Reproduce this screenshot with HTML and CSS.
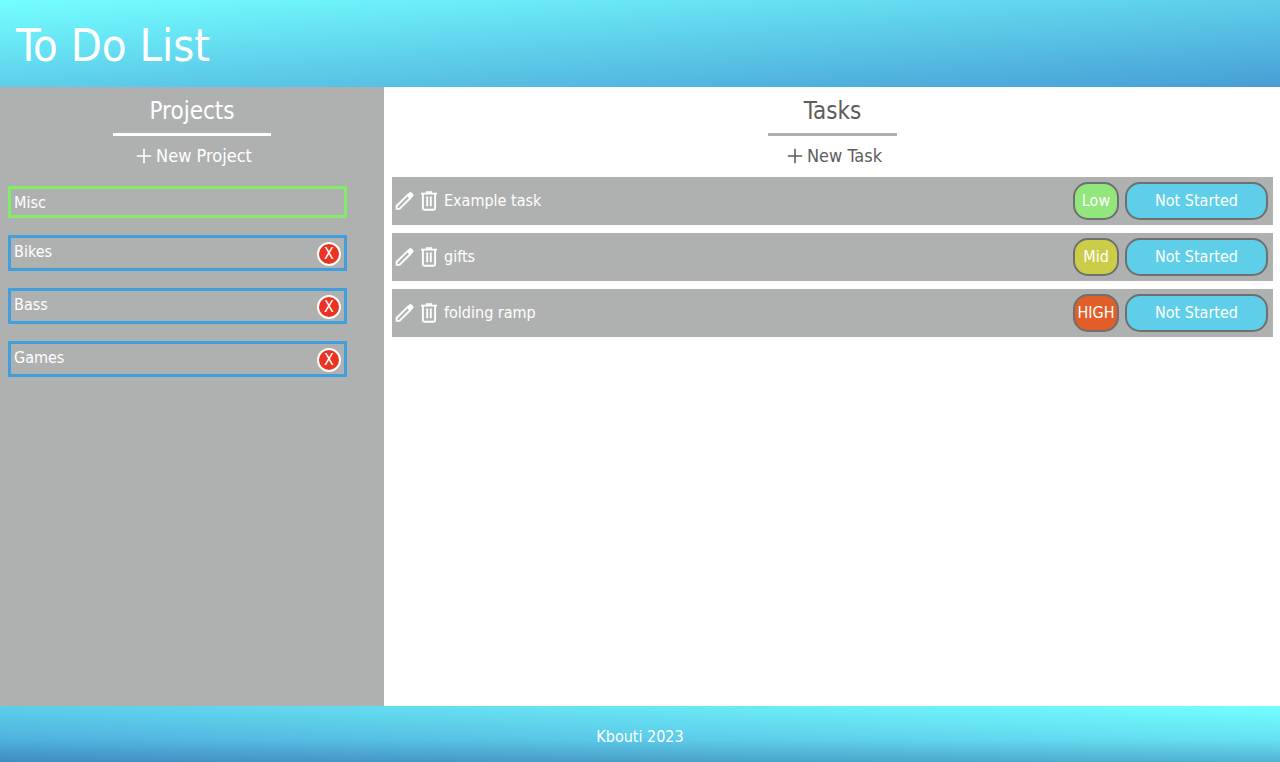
FILE: index.html
```html
<!DOCTYPE html>
<html lang="en">
<head>
<meta charset="utf-8">
<title>To Do List</title>
<link rel="stylesheet" href="styles.css">
</head>
<body>
<svg class="sprite" aria-hidden="true">
  <symbol id="plus" viewBox="0 0 16 16"><path d="M8 .8v14.400M.8 8h14.400" fill="none" stroke="currentColor" stroke-width="1.6"/></symbol>
  <symbol id="pencil" viewBox="0 0 20 20"><path d="M1.700 18.300v-3L13.200 3.800l3 3L4.700 18.300z" fill="none" stroke="currentColor" stroke-width="2" stroke-linejoin="round"/><path d="M12.200 3.800L15 1Q16.200 0 17.400 1L19 2.600Q20 3.800 19 5L16.200 7.800z" fill="currentColor"/></symbol>
  <symbol id="trash" viewBox="0 0 18 20"><path d="M1 2.600h16M6 1.200h6M2.900 3v14.200Q2.900 18.700 4.300 18.700h9.400Q15.100 18.700 15.100 17.200V3M7.200 5.600v9.600M10.800 5.600v9.600" fill="none" stroke="currentColor" stroke-width="1.9"/></symbol>
</svg>
<header class="site-header"><h1>To Do List</h1></header>
<main class="board">
  <aside class="projects">
    <h2 class="heading">Projects</h2>
    <button class="add" type="button"><svg><use href="#plus"/></svg>New Project</button>
    <ul class="project-list">
      <li class="project selected">Misc</li>
      <li class="project">Bikes<button class="remove" type="button" aria-label="Delete Bikes">X</button></li>
      <li class="project">Bass<button class="remove" type="button" aria-label="Delete Bass">X</button></li>
      <li class="project">Games<button class="remove" type="button" aria-label="Delete Games">X</button></li>
    </ul>
  </aside>
  <section class="tasks">
    <h2 class="heading">Tasks</h2>
    <button class="add" type="button"><svg><use href="#plus"/></svg>New Task</button>
    <ul class="task-list">
      <li class="task">
        <button class="icon" type="button" aria-label="Edit"><svg class="pencil"><use href="#pencil"/></svg></button>
        <button class="icon" type="button" aria-label="Delete"><svg class="trash"><use href="#trash"/></svg></button>
        <span class="name">Example task</span>
        <button class="pill priority low" type="button">Low</button>
        <button class="pill status" type="button">Not Started</button>
      </li>
      <li class="task">
        <button class="icon" type="button" aria-label="Edit"><svg class="pencil"><use href="#pencil"/></svg></button>
        <button class="icon" type="button" aria-label="Delete"><svg class="trash"><use href="#trash"/></svg></button>
        <span class="name">gifts</span>
        <button class="pill priority mid" type="button">Mid</button>
        <button class="pill status" type="button">Not Started</button>
      </li>
      <li class="task">
        <button class="icon" type="button" aria-label="Edit"><svg class="pencil"><use href="#pencil"/></svg></button>
        <button class="icon" type="button" aria-label="Delete"><svg class="trash"><use href="#trash"/></svg></button>
        <span class="name">folding ramp</span>
        <button class="pill priority high" type="button">HIGH</button>
        <button class="pill status" type="button">Not Started</button>
      </li>
    </ul>
  </section>
</main>
<footer class="site-footer">Kbouti 2023</footer>
</body>
</html>
```
FILE: styles.css
```css
* { box-sizing: border-box; }

body {
  margin: 0;
  min-height: 100vh;
  display: flex;
  flex-direction: column;
  font-family: Tahoma, "DejaVu Sans Condensed", "Noto Sans", sans-serif;
  font-size: 16px;
  line-height: 20px;
  color: #fff;
  background: #fff;
}

h1, h2, ul { margin: 0; padding: 0; font-weight: 400; list-style: none; }

button {
  font: inherit;
  color: inherit;
  background: none;
  border: 0;
  padding: 0;
  cursor: pointer;
}

.sprite { display: none; }

.site-header {
  padding: 18px 16px 14px;
  background: linear-gradient(to bottom right, #74ffff, #479ed5);
}

.site-header h1 { font-size: 45px; line-height: 55px; }

.board { flex: 1; display: grid; grid-template-columns: 3fr 7fr; }

.projects, .tasks {
  display: flex;
  flex-direction: column;
  align-items: center;
  padding: 8px;
}

.projects { background: #afb1b0; }
.tasks { padding-right: 7px; color: #5d5d5d; }

.heading {
  padding: 0 36px 5px;
  font-size: 24px;
  line-height: 33px;
  border-bottom: 3px solid #fff;
}

.tasks .heading { border-color: #afb1b0; }

.add {
  display: flex;
  align-items: center;
  gap: 4px;
  margin-top: 8px;
  padding-left: 4px;
  font-size: 18px;
  line-height: 24px;
}

.add svg { width: 16px; height: 16px; }

.project-list {
  align-self: stretch;
  display: grid;
  gap: 17px;
  margin: 18px 29px 0 0;
}

.project {
  display: flex;
  justify-content: space-between;
  padding: 4px 3px 2px;
  border: 3px solid #429fdd;
}

.project.selected { border-color: #80ec67; }

.remove {
  width: 24px;
  height: 24px;
  line-height: 20px;
  border: 2px solid #fff;
  border-radius: 50%;
  background: #eb3323;
}

.task-list {
  align-self: stretch;
  display: grid;
  gap: 8px;
  margin-top: 9px;
  color: #fff;
}

.task {
  display: flex;
  align-items: center;
  gap: 6px;
  padding: 5px 5px 5px 3px;
  background: #afb1b0;
}

.icon { display: flex; }
.pencil { width: 19px; height: 20px; }
.trash { width: 18px; height: 20px; }
.name { flex: 1; }

.pill {
  height: 38px;
  border: 2px solid #6f6f6f;
  border-radius: 15px;
}

.priority { width: 46px; }
.status { width: 143px; background: #5fcfe9; }
.low { background: #91e67c; }
.mid { background: #cbcd49; }
.high { background: #e25e29; }

.site-footer {
  padding: 21px 16px 15px;
  text-align: center;
  background:
    linear-gradient(transparent 60%, rgba(40, 70, 110, 0.2)),
    linear-gradient(to bottom left, #74ffff, #479ed5);
}
```
